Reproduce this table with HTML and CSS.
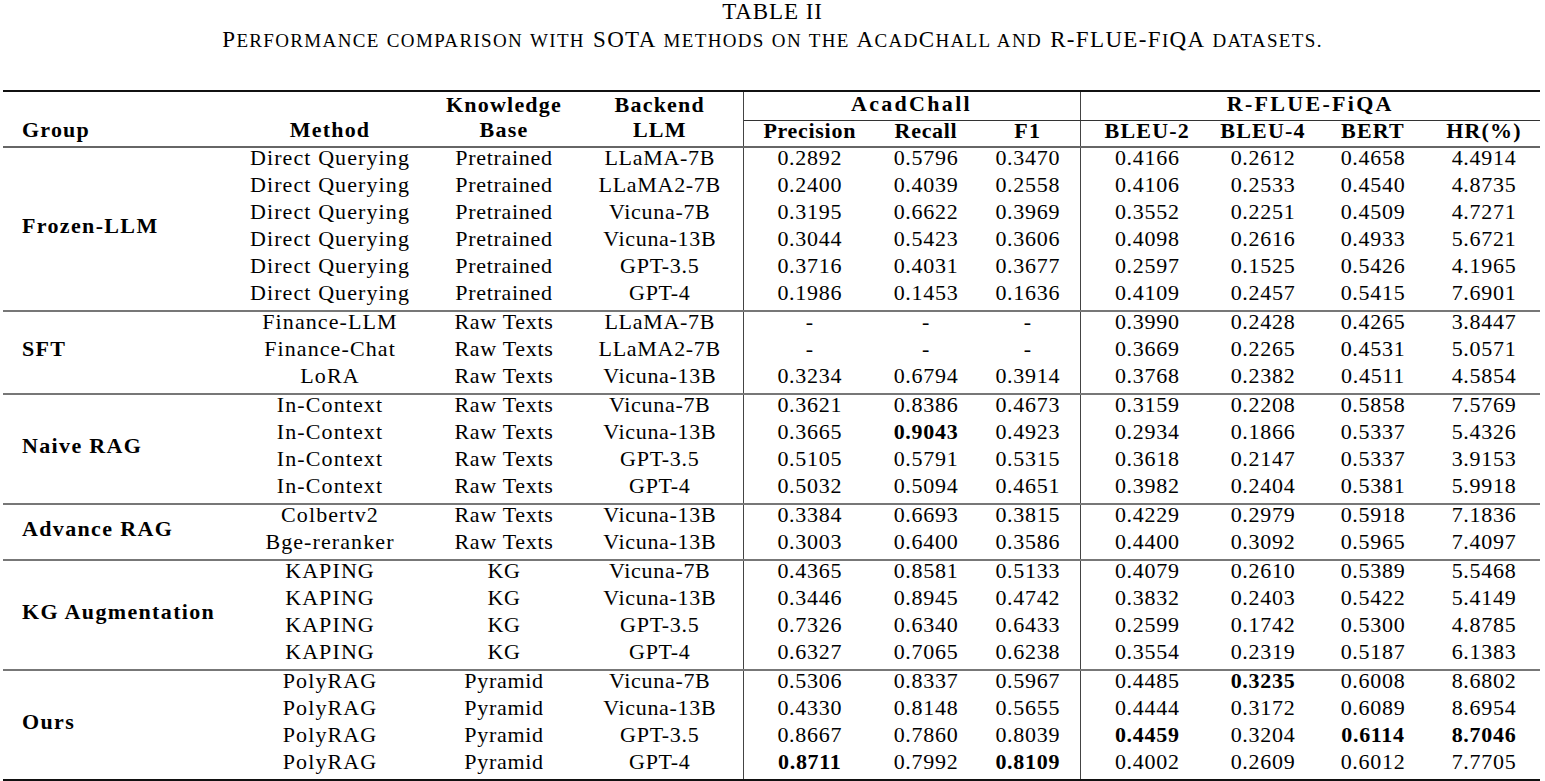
FILE: index.html
```html
<!DOCTYPE html>
<html>
<head>
<meta charset="utf-8">
<link rel="stylesheet" href="styles.css">
</head>
<body>
<div class="caption">
  <div class="cap-title">TABLE II</div>
  <div class="cap-sub">P<span class="sc">erformance comparison with</span> SOTA <span class="sc">methods on the</span> A<span class="sc">cad</span>C<span class="sc">hall and</span> R-FLUE-F<span class="sc">i</span>QA <span class="sc">datasets.</span></div>
</div>
<table class="results">
  <colgroup>
    <col class="c-group"><col class="c-method"><col class="c-kb"><col class="c-llm">
    <col class="c-prec"><col class="c-rec"><col class="c-f1">
    <col class="c-b2"><col class="c-b4"><col class="c-bert"><col class="c-hr">
  </colgroup>
  <thead>
    <tr class="h1">
      <th rowspan="2" class="grp bottom">Group</th>
      <th rowspan="2" class="bottom">Method</th>
      <th rowspan="2" class="bottom">Knowledge<br>Base</th>
      <th rowspan="2" class="bottom vr">Backend<br>LLM</th>
      <th colspan="3" class="vr span">AcadChall</th>
      <th colspan="4" class="span">R-FLUE-FiQA</th>
    </tr>
    <tr class="h2">
      <th class="narrow">Precision</th><th class="narrow">Recall</th><th class="vr">F1</th>
      <th>BLEU-2</th><th>BLEU-4</th><th>BERT</th><th class="hr">HR(%)</th>
    </tr>
  </thead>
  <tbody>
    <tr class="first"><td rowspan="6" class="grp">Frozen-LLM</td><td>Direct Querying</td><td>Pretrained</td><td class="vr">LLaMA-7B</td><td>0.2892</td><td>0.5796</td><td class="vr">0.3470</td><td>0.4166</td><td>0.2612</td><td>0.4658</td><td class="hr">4.4914</td></tr>
    <tr><td>Direct Querying</td><td>Pretrained</td><td class="vr">LLaMA2-7B</td><td>0.2400</td><td>0.4039</td><td class="vr">0.2558</td><td>0.4106</td><td>0.2533</td><td>0.4540</td><td class="hr">4.8735</td></tr>
    <tr><td>Direct Querying</td><td>Pretrained</td><td class="vr">Vicuna-7B</td><td>0.3195</td><td>0.6622</td><td class="vr">0.3969</td><td>0.3552</td><td>0.2251</td><td>0.4509</td><td class="hr">4.7271</td></tr>
    <tr><td>Direct Querying</td><td>Pretrained</td><td class="vr">Vicuna-13B</td><td>0.3044</td><td>0.5423</td><td class="vr">0.3606</td><td>0.4098</td><td>0.2616</td><td>0.4933</td><td class="hr">5.6721</td></tr>
    <tr><td>Direct Querying</td><td>Pretrained</td><td class="vr">GPT-3.5</td><td>0.3716</td><td>0.4031</td><td class="vr">0.3677</td><td>0.2597</td><td>0.1525</td><td>0.5426</td><td class="hr">4.1965</td></tr>
    <tr><td>Direct Querying</td><td>Pretrained</td><td class="vr">GPT-4</td><td>0.1986</td><td>0.1453</td><td class="vr">0.1636</td><td>0.4109</td><td>0.2457</td><td>0.5415</td><td class="hr">7.6901</td></tr>

    <tr class="sep"><td rowspan="3" class="grp">SFT</td><td>Finance-LLM</td><td>Raw Texts</td><td class="vr">LLaMA-7B</td><td>-</td><td>-</td><td class="vr">-</td><td>0.3990</td><td>0.2428</td><td>0.4265</td><td class="hr">3.8447</td></tr>
    <tr><td>Finance-Chat</td><td>Raw Texts</td><td class="vr">LLaMA2-7B</td><td>-</td><td>-</td><td class="vr">-</td><td>0.3669</td><td>0.2265</td><td>0.4531</td><td class="hr">5.0571</td></tr>
    <tr><td>LoRA</td><td>Raw Texts</td><td class="vr">Vicuna-13B</td><td>0.3234</td><td>0.6794</td><td class="vr">0.3914</td><td>0.3768</td><td>0.2382</td><td>0.4511</td><td class="hr">4.5854</td></tr>

    <tr class="sep"><td rowspan="4" class="grp">Naive RAG</td><td>In-Context</td><td>Raw Texts</td><td class="vr">Vicuna-7B</td><td>0.3621</td><td>0.8386</td><td class="vr">0.4673</td><td>0.3159</td><td>0.2208</td><td>0.5858</td><td class="hr">7.5769</td></tr>
    <tr><td>In-Context</td><td>Raw Texts</td><td class="vr">Vicuna-13B</td><td>0.3665</td><td><b>0.9043</b></td><td class="vr">0.4923</td><td>0.2934</td><td>0.1866</td><td>0.5337</td><td class="hr">5.4326</td></tr>
    <tr><td>In-Context</td><td>Raw Texts</td><td class="vr">GPT-3.5</td><td>0.5105</td><td>0.5791</td><td class="vr">0.5315</td><td>0.3618</td><td>0.2147</td><td>0.5337</td><td class="hr">3.9153</td></tr>
    <tr><td>In-Context</td><td>Raw Texts</td><td class="vr">GPT-4</td><td>0.5032</td><td>0.5094</td><td class="vr">0.4651</td><td>0.3982</td><td>0.2404</td><td>0.5381</td><td class="hr">5.9918</td></tr>

    <tr class="sep"><td rowspan="2" class="grp">Advance RAG</td><td>Colbertv2</td><td>Raw Texts</td><td class="vr">Vicuna-13B</td><td>0.3384</td><td>0.6693</td><td class="vr">0.3815</td><td>0.4229</td><td>0.2979</td><td>0.5918</td><td class="hr">7.1836</td></tr>
    <tr><td>Bge-reranker</td><td>Raw Texts</td><td class="vr">Vicuna-13B</td><td>0.3003</td><td>0.6400</td><td class="vr">0.3586</td><td>0.4400</td><td>0.3092</td><td>0.5965</td><td class="hr">7.4097</td></tr>

    <tr class="sep"><td rowspan="4" class="grp">KG Augmentation</td><td>KAPING</td><td>KG</td><td class="vr">Vicuna-7B</td><td>0.4365</td><td>0.8581</td><td class="vr">0.5133</td><td>0.4079</td><td>0.2610</td><td>0.5389</td><td class="hr">5.5468</td></tr>
    <tr><td>KAPING</td><td>KG</td><td class="vr">Vicuna-13B</td><td>0.3446</td><td>0.8945</td><td class="vr">0.4742</td><td>0.3832</td><td>0.2403</td><td>0.5422</td><td class="hr">5.4149</td></tr>
    <tr><td>KAPING</td><td>KG</td><td class="vr">GPT-3.5</td><td>0.7326</td><td>0.6340</td><td class="vr">0.6433</td><td>0.2599</td><td>0.1742</td><td>0.5300</td><td class="hr">4.8785</td></tr>
    <tr><td>KAPING</td><td>KG</td><td class="vr">GPT-4</td><td>0.6327</td><td>0.7065</td><td class="vr">0.6238</td><td>0.3554</td><td>0.2319</td><td>0.5187</td><td class="hr">6.1383</td></tr>

    <tr class="sep"><td rowspan="4" class="grp">Ours</td><td>PolyRAG</td><td>Pyramid</td><td class="vr">Vicuna-7B</td><td>0.5306</td><td>0.8337</td><td class="vr">0.5967</td><td>0.4485</td><td><b>0.3235</b></td><td>0.6008</td><td class="hr">8.6802</td></tr>
    <tr><td>PolyRAG</td><td>Pyramid</td><td class="vr">Vicuna-13B</td><td>0.4330</td><td>0.8148</td><td class="vr">0.5655</td><td>0.4444</td><td>0.3172</td><td>0.6089</td><td class="hr">8.6954</td></tr>
    <tr><td>PolyRAG</td><td>Pyramid</td><td class="vr">GPT-3.5</td><td>0.8667</td><td>0.7860</td><td class="vr">0.8039</td><td><b>0.4459</b></td><td>0.3204</td><td><b>0.6114</b></td><td class="hr"><b>8.7046</b></td></tr>
    <tr class="last"><td>PolyRAG</td><td>Pyramid</td><td class="vr">GPT-4</td><td><b>0.8711</b></td><td>0.7992</td><td class="vr"><b>0.8109</b></td><td>0.4002</td><td>0.2609</td><td>0.6012</td><td class="hr">7.7705</td></tr>
  </tbody>
</table>
</body>
</html>
```
FILE: styles.css
```css
html, body {
  margin: 0;
  padding: 0;
  background: #ffffff;
}

body {
  font-family: "Liberation Serif", "Times New Roman", serif;
  color: #000;
}

.caption {
  text-align: center;
  margin-bottom: 33px;
}

.cap-title {
  font-size: 23px;
  line-height: 24px;
  letter-spacing: 0.9px;
}

.cap-sub {
  font-size: 23px;
  line-height: 32px;
  letter-spacing: 1.35px;
  word-spacing: 1px;
}

.cap-sub .sc {
  font-size: 19px;
  text-transform: uppercase;
}

.results {
  margin-left: 3px;
  width: 1537px;
  table-layout: fixed;
  border-collapse: collapse;
  font-size: 22px;
  letter-spacing: 0.7px;
  border-top: 2px solid #111;
  border-bottom: 2px solid #111;
}

.c-group { width: 226px; }
.c-method { width: 202px; }
.c-kb { width: 146px; }
.c-llm { width: 166px; }
.c-prec { width: 133px; }
.c-rec { width: 100px; }
.c-f1 { width: 104px; }
.c-b2 { width: 134px; }
.c-b4 { width: 98px; }
.c-bert { width: 122px; }
.c-hr { width: 106px; }

.results th,
.results td {
  padding: 0;
  text-align: center;
  white-space: nowrap;
}

.results td {
  line-height: 20px;
  height: 20px;
  padding-bottom: 7px;
}

.results tbody td:nth-last-child(10) {
  letter-spacing: 1.1px;
}

.results th {
  font-weight: bold;
  letter-spacing: 1.2px;
}

.results th.narrow {
  letter-spacing: 0.7px;
}

.results .h1 th.span {
  border-bottom: 1px solid #333;
  line-height: 24px;
  height: 24px;
  padding-bottom: 4px;
  letter-spacing: 2.3px;
}

.results .h2 th {
  line-height: 20px;
  height: 20px;
  padding-bottom: 5px;
}

.results th.bottom {
  vertical-align: bottom;
  line-height: 25px;
  padding-bottom: 4px;
}

.results .grp {
  text-align: left;
  padding-left: 19px;
  font-weight: bold;
  vertical-align: middle;
  letter-spacing: 1.35px;
}

.results th.grp {
  vertical-align: bottom;
  letter-spacing: 1.2px;
}

.results .vr {
  border-right: 1px solid #444;
}

.results .hr {
  padding-right: 6px;
}

.results thead {
  border-bottom: 2px solid #666;
}

.results tr.sep td {
  border-top: 2px solid #777;
}

.results b {
  font-weight: bold;
}
```
